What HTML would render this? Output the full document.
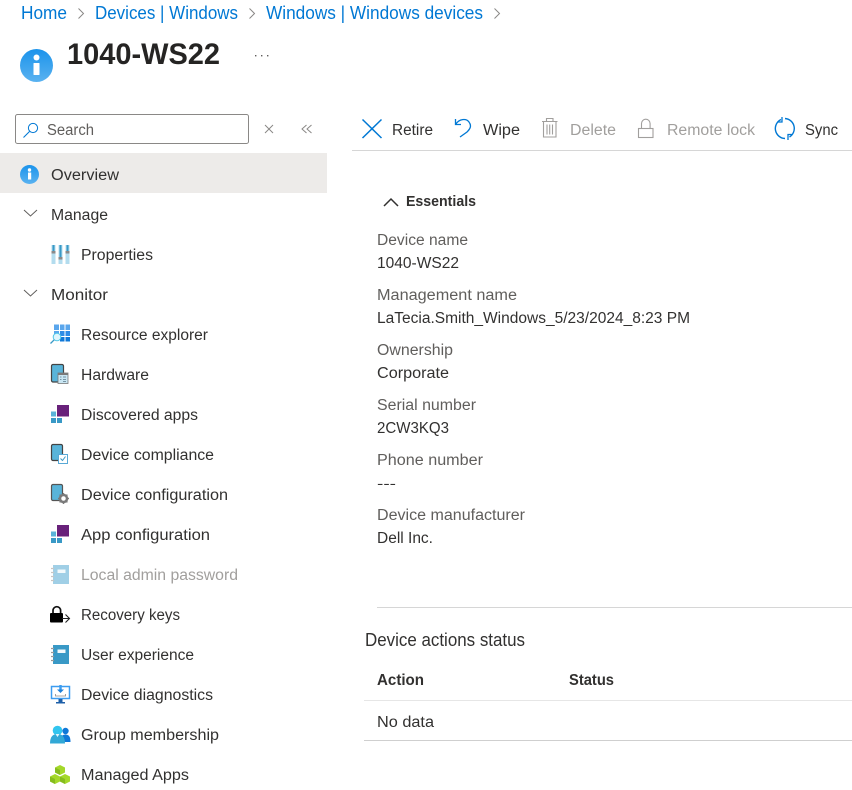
<!DOCTYPE html>
<html lang="en"><head><meta charset="utf-8"><title>1040-WS22</title>
<style>
html,body{margin:0;padding:0;background:#fff;width:852px;height:790px;overflow:hidden}
svg{display:block}
text{font-family:"Liberation Sans",sans-serif;font-size:15.500px;fill:#323130}
.l{fill:#605e5c}
.d{fill:#a19f9d}
.b{fill:#0078d4;font-size:18px}
</style></head><body>
<svg width="852" height="790" viewBox="0 0 852 790" xmlns="http://www.w3.org/2000/svg">
<defs>
<linearGradient id="ib2" x1="0" y1="0" x2="0" y2="1"><stop offset="0" stop-color="#1b93eb"/><stop offset="1" stop-color="#5ab2f0"/></linearGradient>
</defs>

<!-- breadcrumb -->
<text class="b" x="21" y="19" textLength="46" lengthAdjust="spacingAndGlyphs">Home</text>
<path d="M78.500 8.500l5 5-5 5" fill="none" stroke="#8a8886" stroke-width="1"/>
<text class="b" x="95" y="19" textLength="143" lengthAdjust="spacingAndGlyphs">Devices | Windows</text>
<path d="M249.500 8.500l5 5-5 5" fill="none" stroke="#8a8886" stroke-width="1"/>
<text class="b" x="266" y="19" textLength="217" lengthAdjust="spacingAndGlyphs">Windows | Windows devices</text>
<path d="M494.500 8.500l5 5-5 5" fill="none" stroke="#8a8886" stroke-width="1"/>

<!-- title -->
<circle cx="36.500" cy="65.500" r="16.500" fill="url(#ib2)"/>
<circle cx="36.500" cy="57.500" r="3" fill="#fff"/>
<rect x="33.500" y="63" width="6" height="12" rx=".5" fill="#fff"/>
<text x="67" y="64" style="font-size:30px;font-weight:700;fill:#252423" textLength="153" lengthAdjust="spacingAndGlyphs">1040-WS22</text>
<g fill="#605e5c"><rect x="255" y="55" width="1.400" height="1.400"/><rect x="261" y="55" width="1.400" height="1.400"/><rect x="267" y="55" width="1.400" height="1.400"/></g>

<!-- search -->
<rect x="15.500" y="114.500" width="233" height="29" rx="2" fill="#fff" stroke="#8a8886"/>
<circle cx="33" cy="128" r="4.600" fill="none" stroke="#0078d4" stroke-width="1"/>
<path d="M29.500 131.500l-6 6" stroke="#0078d4" stroke-width="1.100"/>
<text class="l" x="47" y="135" textLength="47" lengthAdjust="spacingAndGlyphs">Search</text>
<path d="M265 125l8 8M273 125l-8 8" stroke="#8a8886" stroke-width="1" fill="none"/>
<path d="M306.500 125l-4.500 4 4.500 4M311.500 125l-4.500 4 4.500 4" stroke="#8a8886" stroke-width="1" fill="none"/>

<!-- overview -->
<rect x="0" y="153" width="327" height="40" fill="#edebe9"/>
<circle cx="29.500" cy="174.500" r="9.500" fill="url(#ib2)"/>
<circle cx="29.500" cy="170" r="1.700" fill="#fff"/>
<rect x="28" y="172.500" width="3.200" height="7" fill="#fff"/>
<text x="51" y="180" textLength="68" lengthAdjust="spacingAndGlyphs">Overview</text>

<!-- manage -->
<path d="M24 210l6.500 6 6.500-6" fill="none" stroke="#605e5c" stroke-width="1"/>
<text x="51" y="220" textLength="57" lengthAdjust="spacingAndGlyphs">Manage</text>
<g>
<rect x="51.500" y="245" width="4" height="19" fill="#b3dcee"/><rect x="58.500" y="245" width="4" height="19" fill="#b3dcee"/><rect x="65.500" y="245" width="4" height="19" fill="#b3dcee"/>
<rect x="52.500" y="245" width="2" height="7" fill="#3999c6"/><rect x="59.500" y="245" width="2" height="13" fill="#3999c6"/><rect x="66.500" y="245" width="2" height="7" fill="#3999c6"/>
<rect x="51.500" y="251" width="4" height="2.500" fill="#8a8a8a"/><rect x="58.500" y="257" width="4" height="2.500" fill="#8a8a8a"/><rect x="65.500" y="251" width="4" height="2.500" fill="#8a8a8a"/>
</g>
<text x="81" y="260" textLength="72" lengthAdjust="spacingAndGlyphs">Properties</text>

<!-- monitor -->
<path d="M24 290l6.500 6 6.500-6" fill="none" stroke="#605e5c" stroke-width="1"/>
<text x="51" y="300" textLength="57" lengthAdjust="spacingAndGlyphs">Monitor</text>

<!-- resource explorer -->
<g>
<g fill="#5aa6ec"><rect x="54" y="324.500" width="5" height="5.500"/><rect x="60" y="324.500" width="4.500" height="5.500"/><rect x="65.500" y="324.500" width="4.500" height="5.500"/>
<rect x="54" y="331" width="5" height="3"/></g>
<g fill="#2e8ce6"><rect x="60" y="331" width="4.500" height="5"/><rect x="65.500" y="331" width="4.500" height="5"/></g>
<g fill="#0f78d8"><rect x="60" y="337" width="4.500" height="4.500"/><rect x="65.500" y="337" width="4.500" height="4.500"/></g>
<circle cx="57" cy="337" r="3.800" fill="#dff6fd" stroke="#50c7e8" stroke-width="1"/>
<path d="M54.300 339.700l-3.800 3.800" stroke="#3999c6" stroke-width="1.300"/>
</g>
<text x="81" y="340" textLength="127" lengthAdjust="spacingAndGlyphs">Resource explorer</text>

<!-- hardware -->
<g>
<rect x="51.500" y="364.500" width="12" height="17.500" rx="1.500" fill="#59b4d9" stroke="#444" stroke-width="1.200"/>
<rect x="58" y="373" width="10" height="10.500" fill="#c9e6f3" stroke="#7a7a7a" stroke-width=".8"/>
<rect x="58" y="373" width="10" height="2" fill="#7a7a7a"/>
<path d="M60 377h1.500M60 379.500h1.500M63 377h3M63 379.500h3M63 381.500h3" stroke="#5a7a8a" stroke-width=".8"/>
</g>
<text x="81" y="380" textLength="68" lengthAdjust="spacingAndGlyphs">Hardware</text>

<!-- discovered apps -->
<g>
<rect x="57" y="405" width="12" height="11.500" fill="#68217a"/>
<rect x="51" y="411.500" width="5" height="5" fill="#59b4d9"/>
<rect x="51" y="418" width="5" height="5" fill="#3999c6"/><rect x="57" y="418" width="5" height="5" fill="#3999c6"/>
</g>
<text x="81" y="420" textLength="117" lengthAdjust="spacingAndGlyphs">Discovered apps</text>

<!-- device compliance -->
<g>
<rect x="51.500" y="444.500" width="11" height="16" rx="1.500" fill="#59b4d9" stroke="#444" stroke-width="1.200"/>
<rect x="58.500" y="454.500" width="9" height="9" fill="#fff" stroke="#59a9d6" stroke-width="1"/>
<path d="M60.500 458.500l2 2 3-4" fill="none" stroke="#3999c6" stroke-width="1"/>
</g>
<text x="81" y="460" textLength="133" lengthAdjust="spacingAndGlyphs">Device compliance</text>

<!-- device configuration -->
<g>
<rect x="51.500" y="484.500" width="11" height="16" rx="1.500" fill="#59b4d9" stroke="#555" stroke-width="1.200"/>
<circle cx="63.500" cy="498.500" r="3.500" fill="#fff" stroke="#7a7a7a" stroke-width="2.500"/>
<path d="M63.500 493v2M63.500 502v2M58 498.500h2M67 498.500h2M59.600 494.600l1.400 1.400M66 501l1.400 1.400M67.400 494.600L66 496M61 501l-1.400 1.400" stroke="#7a7a7a" stroke-width="1.400"/>
</g>
<text x="81" y="500" textLength="147" lengthAdjust="spacingAndGlyphs">Device configuration</text>

<!-- app configuration -->
<g>
<rect x="57" y="525" width="12" height="11.500" fill="#68217a"/>
<rect x="51" y="531.500" width="5" height="5" fill="#59b4d9"/>
<rect x="51" y="538" width="5" height="5" fill="#3999c6"/><rect x="57" y="538" width="5" height="5" fill="#3999c6"/>
</g>
<text x="81" y="540" textLength="129" lengthAdjust="spacingAndGlyphs">App configuration</text>

<!-- local admin password -->
<g>
<rect x="53" y="565" width="16" height="19" fill="#a0cfe6"/>
<rect x="57.500" y="569.500" width="8" height="3.500" fill="#f2f9fc"/>
<path d="M51 568.500h3M51 572.500h3M51 576.500h3M51 580.500h3" stroke="#c8c6c4" stroke-width="1.200"/>
</g>
<text class="d" x="81" y="580" textLength="157" lengthAdjust="spacingAndGlyphs">Local admin password</text>

<!-- recovery keys -->
<g>
<path d="M53 614v-3.500a3.800 3.800 0 0 1 7.600 0V614" fill="none" stroke="#111" stroke-width="1.700"/>
<rect x="50" y="613" width="13" height="9.500" rx="1" fill="#000"/>
<path d="M62 618.500h7.500M65.500 614.500l4 4-4 4" fill="none" stroke="#222" stroke-width="1.100"/>
</g>
<text x="81" y="620" textLength="99" lengthAdjust="spacingAndGlyphs">Recovery keys</text>

<!-- user experience -->
<g>
<rect x="53" y="645" width="16" height="19" fill="#3999c6"/>
<rect x="57.500" y="649.500" width="8" height="3.500" fill="#f2f9fc"/>
<path d="M51 648.500h3M51 652.500h3M51 656.500h3M51 660.500h3" stroke="#9a9a9a" stroke-width="1.200"/>
</g>
<text x="81" y="660" textLength="113" lengthAdjust="spacingAndGlyphs">User experience</text>

<!-- device diagnostics -->
<g>
<rect x="51.500" y="686.500" width="18" height="12" fill="#fff" stroke="#3c9cf0" stroke-width="1.500"/>
<path d="M60.500 685v5" stroke="#3c9cf0" stroke-width="2.500"/>
<path d="M57 689.500h7l-3.500 3.500z" fill="#1e7fd8"/>
<path d="M55.500 694v2h10v-2" fill="none" stroke="#8a8a8a" stroke-width=".8"/>
<rect x="58.500" y="699" width="4" height="3" fill="#1d5fa8"/>
<rect x="56" y="702" width="9" height="1.500" fill="#1d5fa8"/>
</g>
<text x="81" y="700" textLength="132" lengthAdjust="spacingAndGlyphs">Device diagnostics</text>

<!-- group membership -->
<g>
<circle cx="65.500" cy="731" r="3.200" fill="#0f78d8"/>
<path d="M60 742c0-5 2-7.500 5.500-7.500s5 2.500 5 7.500z" fill="#0f78d8"/>
<circle cx="57.500" cy="730.500" r="4.800" fill="#32c5ef"/>
<path d="M50 743.500c0-7 3-9.500 7.500-9.500s7.500 2.500 7.500 9.500z" fill="#32a8d6"/>
<path d="M55.500 734l2 3 2-3z" fill="#dff6fd"/>
</g>
<text x="81" y="740" textLength="138" lengthAdjust="spacingAndGlyphs">Group membership</text>

<!-- managed apps -->
<g>
<path d="M60 765l5 2.500v5l-5 2.500-5-2.500v-5z" fill="#a4d82a"/>
<path d="M60 770v5l-5-2.500v-5z" fill="#86bc1e"/>
<path d="M55 774l5 2.500v5l-5 2.500-5-2.500v-5z" fill="#a4d82a"/>
<path d="M55 779v5l-5-2.500v-5z" fill="#86bc1e"/>
<path d="M65 774l5 2.500v5l-5 2.500-5-2.500v-5z" fill="#a4d82a"/>
<path d="M65 779v5l-5-2.500v-5z" fill="#86bc1e"/>
</g>
<text x="81" y="780" textLength="108" lengthAdjust="spacingAndGlyphs">Managed Apps</text>

<!-- toolbar -->
<path d="M362.500 119.500l19 18.500M381.500 119.500l-19 18.500" stroke="#0078d4" stroke-width="1.500" fill="none"/>
<text x="392" y="135" textLength="41" lengthAdjust="spacingAndGlyphs">Retire</text>
<path d="M455.500 119v5.500h5.500M456 124C459 119 466 118 469 122 472 126 470 129 467 132L460 137" fill="none" stroke="#0078d4" stroke-width="1.300"/>
<text x="483" y="135" textLength="37" lengthAdjust="spacingAndGlyphs">Wipe</text>
<path d="M542 121.500h15.500M543.500 121.500v15.500h12.500v-15.500M546.500 121.500v-3h6.500v3M547 124.500v10M549.700 124.500v10M552.500 124.500v10" fill="none" stroke="#a19f9d" stroke-width="1.100"/>
<text class="d" x="570" y="135" textLength="46" lengthAdjust="spacingAndGlyphs">Delete</text>
<rect x="638.500" y="128.500" width="14.500" height="9" fill="none" stroke="#a19f9d" stroke-width="1.100"/>
<path d="M641.500 128.500v-5a4.300 4.300 0 0 1 8.600 0v5" fill="none" stroke="#a19f9d" stroke-width="1.100"/>
<text class="d" x="667" y="135" textLength="88" lengthAdjust="spacingAndGlyphs">Remote lock</text>
<path d="M785 138.500A10 10 0 0 1 781 119.500M785 118.500A10 10 0 0 1 789.500 137" fill="none" stroke="#0078d4" stroke-width="1.400"/>
<path d="M782 117v5h-4.500M788 140v-5.500h4.500" fill="none" stroke="#0078d4" stroke-width="1.300"/>
<text x="805" y="135" textLength="33" lengthAdjust="spacingAndGlyphs">Sync</text>
<rect x="352" y="150" width="500" height="1" fill="#d6d6d6"/>

<!-- essentials -->
<path d="M384 206l7-7 7 7" fill="none" stroke="#323130" stroke-width="1.500"/>
<text x="406" y="206" style="font-weight:700;font-size:15px" textLength="70" lengthAdjust="spacingAndGlyphs">Essentials</text>

<text class="l" x="377" y="245" textLength="91" lengthAdjust="spacingAndGlyphs">Device name</text>
<text x="377" y="268" textLength="82" lengthAdjust="spacingAndGlyphs">1040-WS22</text>
<text class="l" x="377" y="300" textLength="140" lengthAdjust="spacingAndGlyphs">Management name</text>
<text x="377" y="323" textLength="313" lengthAdjust="spacingAndGlyphs">LaTecia.Smith_Windows_5/23/2024_8:23 PM</text>
<text class="l" x="377" y="355" textLength="76" lengthAdjust="spacingAndGlyphs">Ownership</text>
<text x="377" y="378" textLength="72" lengthAdjust="spacingAndGlyphs">Corporate</text>
<text class="l" x="377" y="410" textLength="99" lengthAdjust="spacingAndGlyphs">Serial number</text>
<text x="377" y="433" textLength="72" lengthAdjust="spacingAndGlyphs">2CW3KQ3</text>
<text class="l" x="377" y="465" textLength="106" lengthAdjust="spacingAndGlyphs">Phone number</text>
<text x="377" y="488" style="font-size:14px" textLength="19" lengthAdjust="spacingAndGlyphs">---</text>
<text class="l" x="377" y="520" textLength="148" lengthAdjust="spacingAndGlyphs">Device manufacturer</text>
<text x="377" y="543" textLength="56" lengthAdjust="spacingAndGlyphs">Dell Inc.</text>

<rect x="377" y="607" width="475" height="1" fill="#d6d6d6"/>

<text x="365" y="646" style="font-size:18px" textLength="160" lengthAdjust="spacingAndGlyphs">Device actions status</text>
<text x="377" y="685" style="font-weight:700" textLength="47" lengthAdjust="spacingAndGlyphs">Action</text>
<text x="569" y="685" style="font-weight:700" textLength="45" lengthAdjust="spacingAndGlyphs">Status</text>
<rect x="364" y="700" width="488" height="1" fill="#e6e6e6"/>
<text x="377" y="727" textLength="57" lengthAdjust="spacingAndGlyphs">No data</text>
<rect x="364" y="740" width="488" height="1" fill="#cfcfcf"/>
</svg>
</body></html>
